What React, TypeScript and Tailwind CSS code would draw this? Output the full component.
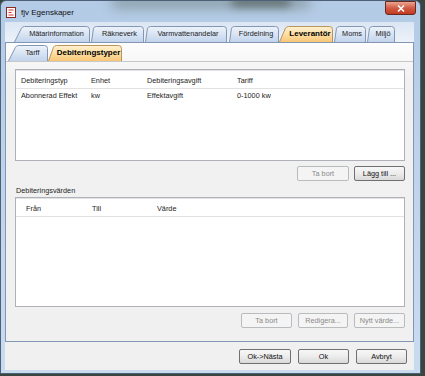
import React from "react";

/**
 * Win7-style "fjv Egenskaper" property dialog: nested tab strips,
 * two list views with their action buttons, and the footer row.
 */

interface TabDef {
  readonly label: string;
  readonly width: number;
  readonly gap: number;
  readonly slant: number;
  readonly active?: boolean;
}

const topTabs: TabDef[] = [
  { label: "Mätarinformation", width: 76, gap: 0, slant: 9 },
  { label: "Räkneverk", width: 53, gap: 1, slant: 4 },
  { label: "Varmvattenandelar", width: 82, gap: 1, slant: 4 },
  { label: "Fördelning", width: 50, gap: 2, slant: 4 },
  { label: "Leverantör", width: 54, gap: 0, slant: 8, active: true },
  { label: "Moms", width: 32, gap: 1, slant: 4 },
  { label: "Miljö", width: 28, gap: 1, slant: 4 },
];

const subTabs: TabDef[] = [
  { label: "Tarff", width: 40, gap: 0, slant: 9 },
  { label: "Debiteringstyper", width: 74, gap: 0, slant: 7, active: true },
];

function Tab({ tab, h }: { tab: TabDef; h: number }) {
  const { width: w, slant: s, active } = tab;
  const d = `M0.5 ${h} L${s - 1.5} 2.2 Q${s - 0.5} 0.5 ${s + 1.5} 0.5 L${w - 3.5} 0.5 Q${w - 0.5} 0.5 ${w - 0.5} 3.5 L${w - 0.5} ${h}`;
  const id = `g-${tab.label.replace(/[^a-z]/gi, "")}`;
  return (
    <div
      className={`relative shrink-0 ${active ? "z-10" : ""}`}
      style={{ width: w, height: h, marginLeft: tab.gap }}
    >
      <svg className="absolute inset-0" width={w} height={h + 1} viewBox={`0 0 ${w} ${h + 1}`}>
        <defs>
          <linearGradient id={id} x1="0" y1="0" x2="0" y2="1">
            {active ? (
              <>
                <stop offset="0" stopColor="#fff1d2" />
                <stop offset="0.45" stopColor="#fde1a8" />
                <stop offset="1" stopColor="#f8c676" />
              </>
            ) : (
              <>
                <stop offset="0" stopColor="#eef3fa" />
                <stop offset="0.5" stopColor="#d8e4f4" />
                <stop offset="1" stopColor="#c2d4ec" />
              </>
            )}
          </linearGradient>
        </defs>
        <path d={`${d} Z`} fill={`url(#${id})`} />
        <path d={d} fill="none" stroke={active ? "#b8935a" : "#8397b4"} strokeWidth="1" />
      </svg>
      <div
        className={`absolute top-0 bottom-0 right-0 flex items-center justify-center leading-none ${
          active ? "font-bold text-[8px] text-black" : "text-[7.3px] text-[#1b1b1b]"
        }`}
        style={{ left: s }}
      >
        {tab.label}
      </div>
    </div>
  );
}

function Btn({ label, w, enabled }: { label: string; w: number; enabled?: boolean }) {
  return (
    <div
      className={`h-[15px] flex items-center justify-center rounded-[2px] text-[7.3px] leading-none border ${
        enabled
          ? "border-[#707070] bg-gradient-to-b from-[#f7f7f7] via-[#ececec] to-[#d9d9d9] text-[#111]"
          : "border-[#b8bcbf] bg-[#f4f4f4] text-[#8a8a8a]"
      }`}
      style={{ width: w }}
    >
      {label}
    </div>
  );
}

function ListView({
  cols,
  rows,
  height,
  pad,
}: {
  cols: { label: string; w: number }[];
  rows: string[][];
  height: number;
  pad: number;
}) {
  return (
    <div
      className="w-[390px] bg-white border border-[#aeb1b8] shadow-[inset_0_1px_0_#e3e3e3]"
      style={{ height }}
    >
      <div
        className="h-[19px] flex pt-[6px] border-b border-[#e2e2e2] text-[7.3px] leading-[10px] text-[#1e1e1e]"
        style={{ paddingLeft: pad }}
      >
        {cols.map((c) => (
          <div key={c.label} className="shrink-0" style={{ width: c.w }}>
            {c.label}
          </div>
        ))}
      </div>
      {rows.map((r, i) => (
        <div
          key={i}
          className="flex pt-[2px] text-[7.3px] leading-[10px] text-[#1e1e1e]"
          style={{ paddingLeft: pad }}
        >
          {r.map((cell, j) => (
            <div key={j} className="shrink-0" style={{ width: cols[j].w }}>
              {cell}
            </div>
          ))}
        </div>
      ))}
    </div>
  );
}

export default function App() {
  return (
    <div className="w-[425px] h-[376px] overflow-hidden bg-[#39463f] font-['Liberation_Sans',Arial,sans-serif]">
      <div className="w-[421px] h-[374px] flex flex-col rounded-t-[6px] border border-[#4d6078] bg-gradient-to-b from-[#b3cbe6] via-[#bfd4ec] to-[#c9dbef]">
        {/* Title bar */}
        <div className="relative h-[21px] shrink-0 flex items-start overflow-hidden rounded-t-[5px]">
          <div className="absolute left-[110px] top-[-6px] w-[200px] h-[14px] rounded-full bg-[#5b6a5a] opacity-40 blur-[6px]" />
          <div className="absolute left-[230px] top-[-4px] w-[60px] h-[10px] rounded-full bg-[#2f3b2f] opacity-50 blur-[4px]" />
          <div className="relative flex items-center gap-[5px] pl-[5px] pt-[6px]">
            <svg width="10" height="11" viewBox="0 0 10 11">
              <rect x="0.5" y="0.5" width="9" height="10" fill="#fff" stroke="#8a2a20" />
              <path d="M2.5 3 h5 M2.5 5.5 h3 M2.5 8 h5" stroke="#d0302a" strokeWidth="1.2" />
            </svg>
            <span className="text-[8px] leading-none text-[#111]">fjv Egenskaper</span>
          </div>
          <div className="relative ml-auto mr-[4px] w-[31px] h-[14px] rounded-b-[3px] border border-[#6b2a20] bg-gradient-to-b from-[#e9a592] via-[#d25a43] to-[#c13a22] flex items-center justify-center">
            <svg width="8" height="7" viewBox="0 0 8 7">
              <path d="M1 0.5 L7 6.5 M7 0.5 L1 6.5" stroke="#fff" strokeWidth="1.6" />
            </svg>
          </div>
        </div>

        {/* Client area */}
        <div className="flex-1 flex flex-col ml-[4px] mr-[6px] mb-[3px]">
          <div className="h-[20px] shrink-0 flex items-end pl-[9px] bg-gradient-to-b from-[#dbe6f3] to-[#edf2f9]">
            {topTabs.map((t) => (
              <Tab key={t.label} tab={t} h={16} />
            ))}
          </div>

          {/* Tab page */}
          <div className="h-[300px] shrink-0 flex flex-col border border-[#8397b4] bg-gradient-to-b from-[#fdfdfd] via-[#f1f1f1] via-[12%] to-[#f0f0f0]">
            <div className="h-[19px] shrink-0 flex items-end pl-[2px] border-b border-[#c7c7c7]">
              {subTabs.map((t) => (
                <Tab key={t.label} tab={t} h={16} />
              ))}
            </div>
            <div className="flex flex-col pl-[9px] pt-[7px]">
              <ListView
                height={92}
                pad={5}
                cols={[
                  { label: "Debiteringstyp", w: 70 },
                  { label: "Enhet", w: 56 },
                  { label: "Debiteringsavgift", w: 90 },
                  { label: "Tariff", w: 100 },
                ]}
                rows={[["Abonnerad Effekt", "kw", "Effektavgift", "0-1000 kw"]]}
              />
              <div className="w-[390px] flex justify-end gap-[5px] mt-[5px]">
                <Btn label="Ta bort" w={52} />
                <Btn label="Lägg till ..." w={51} enabled />
              </div>
              <div className="mt-[5px] pl-[1px] h-[10px] text-[7.3px] leading-[10px] text-[#1e1e1e]">
                Debiteringsvärden
              </div>
              <div className="mt-[1px]">
                <ListView
                  height={110}
                  pad={10}
                  cols={[
                    { label: "Från", w: 66 },
                    { label: "Till", w: 65 },
                    { label: "Värde", w: 100 },
                  ]}
                  rows={[]}
                />
              </div>
              <div className="w-[390px] flex justify-end gap-[6px] mt-[6px]">
                <Btn label="Ta bort" w={51} />
                <Btn label="Redigera..." w={50} />
                <Btn label="Nytt värde..." w={51} />
              </div>
            </div>
          </div>

          {/* Footer */}
          <div className="flex-1 flex justify-end items-start gap-[7px] pt-[7px] pr-[7px] bg-[#f0f0f0]">
            <Btn label="Ok->Nästa" w={52} enabled />
            <Btn label="Ok" w={51} enabled />
            <Btn label="Avbryt" w={51} enabled />
          </div>
        </div>
      </div>
    </div>
  );
}
